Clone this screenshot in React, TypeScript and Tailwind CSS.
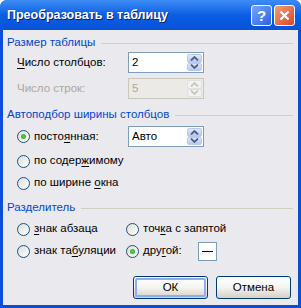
import React from 'react';

const Spin: React.FC<{ disabled?: boolean }> = ({ disabled }) => {
  const btn = disabled
    ? 'border-[#e0e0e0] bg-[#f2f2f2]'
    : 'border-[#b9c9f1] bg-linear-to-b from-[#dfe8fb] to-[#b7c9f3]';
  const arrow = disabled ? '#c9c7ba' : '#4d6185';
  return (
    <div className="flex flex-col w-[15px] h-[17px] my-auto mr-px gap-0">
      <div className={`flex-1 flex items-center justify-center rounded-[2px] border ${btn}`}>
        <svg width="9" height="5" viewBox="0 0 9 5">
          <path d="M1 4.5 L4.5 1 L8 4.5" fill="none" stroke={arrow} strokeWidth="1.8" />
        </svg>
      </div>
      <div className={`flex-1 flex items-center justify-center rounded-[2px] border ${btn}`}>
        <svg width="9" height="5" viewBox="0 0 9 5">
          <path d="M1 0.5 L4.5 4 L8 0.5" fill="none" stroke={arrow} strokeWidth="1.8" />
        </svg>
      </div>
    </div>
  );
};

const SpinInput: React.FC<{ value: string; disabled?: boolean }> = ({ value, disabled }) => (
  <div
    className={`flex w-[76px] h-[21px] border ${
      disabled ? 'border-[#c9c7ba] bg-[#ebeae6] text-[#aca899]' : 'border-[#7f9db9] bg-white text-black'
    }`}
  >
    <div className="flex-1 pl-[3px] flex items-center">{value}</div>
    <Spin disabled={disabled} />
  </div>
);

const Radio: React.FC<{ checked?: boolean }> = ({ checked }) => (
  <div className="w-[13px] h-[13px] rounded-full border border-[#1c5180] bg-linear-to-br from-[#dcdcd7] to-white flex items-center justify-center shrink-0">
    {checked && (
      <div className="w-[5px] h-[5px] rounded-full bg-radial from-[#55d651] to-[#21a121]" />
    )}
  </div>
);

const GroupHeader: React.FC<{ title: string; className: string }> = ({ title, className }) => (
  <div className={`h-[14px] flex items-center pl-[4px] pr-[5px] ${className}`}>
    <span className="text-[#0046d5] whitespace-nowrap">{title}</span>
    <div className="flex-1 h-px bg-[#d0d0bf] ml-[6px]" />
  </div>
);

const U: React.FC<{ children: React.ReactNode }> = ({ children }) => <span className="underline underline-offset-[2px]">{children}</span>;

const Button: React.FC<{ label: string; focus?: boolean }> = ({ label, focus }) => (
  <div className="w-[75px] h-[23px] rounded-[3px] border border-[#003c74] bg-linear-to-b from-white via-[#f4f4f0] to-[#d6d0c5] flex p-px">
    <div
      className={`flex-1 flex items-center justify-center rounded-[2px] ${
        focus ? 'border-2 border-[#8aaef0]' : 'border-2 border-transparent'
      }`}
    >
      {label}
    </div>
  </div>
);

export default function App() {
  return (
    <div className="w-[301px] h-[308px] flex flex-col bg-[#0a4fd6] rounded-t-[7px] overflow-hidden text-[11.5px] text-black font-['Liberation_Sans',Arial,sans-serif] leading-none">
      {/* title bar */}
      <div className="h-[30px] shrink-0 flex items-center pl-[7px] pr-[6px] bg-linear-to-b from-[#3d8cf5] via-[#0a5ee4] to-[#0852d8]">
        <span className="flex-1 text-white font-bold text-[12.5px] [text-shadow:1px_1px_0_#0a1e7a]">
          Преобразовать в таблицу
        </span>
        <div className="flex gap-[2px]">
          <div className="w-[21px] h-[21px] rounded-[3px] border border-white bg-linear-to-br from-[#78a7f9] to-[#2a5ee9] flex items-center justify-center text-white font-bold text-[15px]">
            ?
          </div>
          <div className="w-[21px] h-[21px] rounded-[3px] border border-white bg-linear-to-br from-[#f09d7f] to-[#d8431e] flex items-center justify-center">
            <svg width="11" height="11" viewBox="0 0 11 11">
              <path d="M1.5 1.5 L9.5 9.5 M9.5 1.5 L1.5 9.5" stroke="white" strokeWidth="2.2" />
            </svg>
          </div>
        </div>
      </div>

      {/* body */}
      <div className="flex-1 mx-[3px] mb-[3px] bg-[#eae9ee] flex flex-col">
        <GroupHeader title="Размер таблицы" className="mt-[6px]" />
        <div className="mt-[2px] h-[21px] flex items-center pl-[14px]">
          <span className="w-[111px]">
            <U>Ч</U>исло столбцов:
          </span>
          <SpinInput value="2" />
        </div>
        <div className="mt-[5px] h-[21px] flex items-center pl-[14px]">
          <span className="w-[111px] text-[#aca899]">Число строк:</span>
          <SpinInput value="5" disabled />
        </div>

        <GroupHeader title="Автоподбор ширины столбцов" className="mt-[9px]" />
        <div className="mt-[4px] h-[21px] flex items-center pl-[14px]">
          <div className="w-[111px] flex items-center gap-[4px]">
            <Radio checked />
            <span>
              посто<U>я</U>нная:
            </span>
          </div>
          <SpinInput value="Авто" />
        </div>
        <div className="mt-[3px] h-[22px] flex items-center gap-[4px] pl-[14px]">
          <Radio />
          <span>
            по содер<U>ж</U>имому
          </span>
        </div>
        <div className="h-[22px] flex items-center gap-[4px] pl-[14px]">
          <Radio />
          <span>
            по ширине <U>о</U>кна
          </span>
        </div>

        <GroupHeader title="Разделитель" className="mt-[7px]" />
        <div className="mt-[3px] h-[22px] flex items-center pl-[14px]">
          <div className="w-[109px] flex items-center gap-[4px]">
            <Radio />
            <span>
              <U>з</U>нак абзаца
            </span>
          </div>
          <div className="flex items-center gap-[4px]">
            <Radio />
            <span>
              точ<U>к</U>а с запятой
            </span>
          </div>
        </div>
        <div className="h-[22px] flex items-center pl-[14px]">
          <div className="w-[109px] flex items-center gap-[4px]">
            <Radio />
            <span>
              знак та<U>б</U>уляции
            </span>
          </div>
          <div className="flex items-center gap-[4px]">
            <Radio checked />
            <span className="w-[51px]">
              дру<U>г</U>ой:
            </span>
            <div className="w-[19px] h-[19px] border border-[#7f9db9] bg-white flex items-center justify-center">
              <div className="w-[11px] h-px bg-black" />
            </div>
          </div>
        </div>

        <div className="mt-[14px] flex justify-end gap-[8px] pr-[7px]">
          <Button label="ОК" focus />
          <Button label="Отмена" />
        </div>
      </div>
    </div>
  );
}
